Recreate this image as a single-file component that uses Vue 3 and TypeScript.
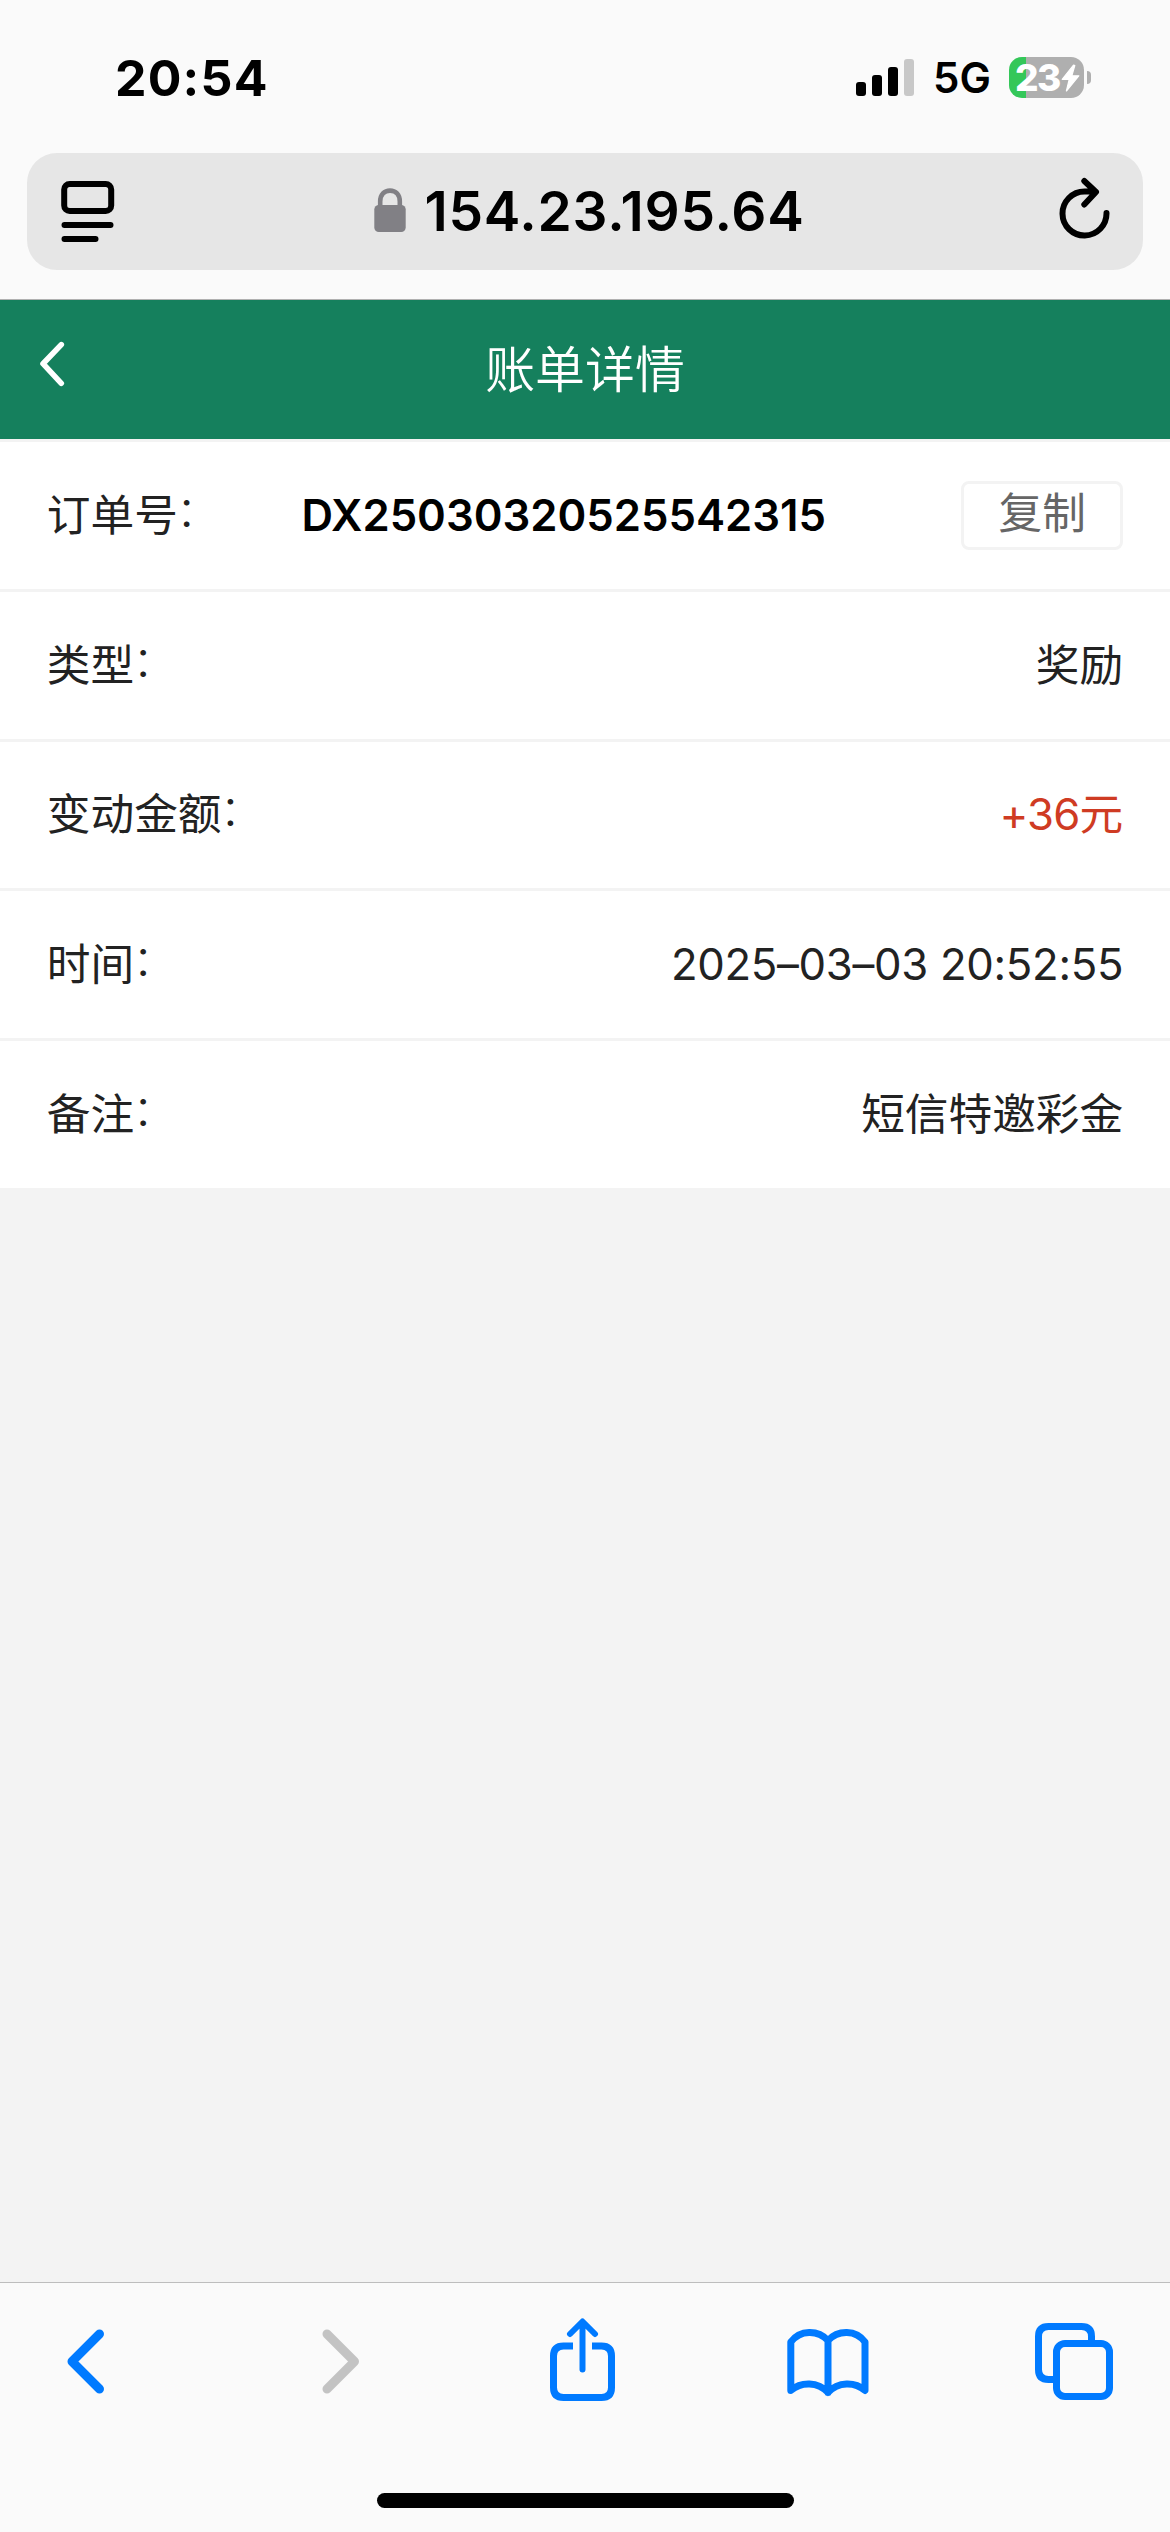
<script setup lang="ts">
interface BillRow {
  label: string
  value: string
  kind?: 'order' | 'amount' | 'number'
}

const rows: BillRow[] = [
  { label: '订单号', value: 'DX25030320525542315', kind: 'order' },
  { label: '类型', value: '奖励' },
  { label: '变动金额', value: '+36', kind: 'amount' },
  { label: '时间', value: '2025–03–03 20:52:55', kind: 'number' },
  { label: '备注', value: '短信特邀彩金' },
]

const copy = (text: string) => navigator.clipboard?.writeText(text)
</script>

<template>
  <div class="screen">
    <header class="chrome">
      <div class="status">
        <span class="clock">20:54</span>
        <div class="indicators">
          <svg class="signal" width="58" height="38" viewBox="0 0 58 38">
            <rect x="0" y="23" width="10" height="14" rx="3" />
            <rect x="16" y="16" width="10" height="21" rx="3" />
            <rect x="32" y="8" width="10" height="29" rx="3" />
            <rect x="48" y="0" width="10" height="37" rx="3" fill="#c8c8c8" />
          </svg>
          <span class="network">5G</span>
          <div class="battery">
            <span class="level">23</span>
            <svg class="bolt" width="19" height="28" viewBox="0 0 19 28">
              <path d="M12.5 1 1.2 15.4h7L5.4 27 17.8 11.8h-7L13.8 1.6z" fill="#fff" stroke="#fff" stroke-width="1.2" stroke-linejoin="round" />
            </svg>
          </div>
          <span class="nub"></span>
        </div>
      </div>

      <div class="urlbar">
        <svg width="54" height="62" viewBox="0 0 54 62" fill="none" stroke="#000" stroke-width="6" stroke-linecap="round">
          <rect x="3.2" y="3" width="47" height="27" rx="5.5" />
          <path d="M3.5 44h46M3.5 58h31" />
        </svg>
        <div class="address">
          <svg class="lock" width="32" height="44" viewBox="0 0 32 44">
            <path d="M6.2 20V13.5C6.2 6.5 10.4 2.6 16 2.6S25.8 6.5 25.8 13.5V20" fill="none" stroke="#818085" stroke-width="4.6" />
            <rect x="0.3" y="17" width="31.4" height="27" rx="4.5" fill="#818085" />
          </svg>
          <span class="host">154.23.195.64</span>
        </div>
        <svg class="reload" width="52" height="64" viewBox="0 0 52 64" fill="none" stroke="#000" stroke-width="6" stroke-linecap="round" stroke-linejoin="round">
          <path d="M47.5 36A22 22 0 1 1 25.5 14.5H36M25.3 4 37 15 25.3 27.5" />
        </svg>
      </div>
    </header>

    <nav class="titlebar">
      <svg class="back" width="26" height="46" viewBox="0 0 26 46" fill="none" stroke="#fff" stroke-width="5.6" stroke-linecap="round" stroke-linejoin="round">
        <path d="M22.3 3.6 4 22.7 22.3 42.3" />
      </svg>
      <h1>账单详情</h1>
    </nav>

    <main class="content">
      <div v-for="row in rows" :key="row.label" class="row">
        <span class="label">{{ row.label }}<span class="colon">：</span></span>
        <template v-if="row.kind === 'order'">
          <strong class="order">{{ row.value }}</strong>
          <button class="copy" type="button" @click="copy(row.value)">复制</button>
        </template>
        <span v-else-if="row.kind === 'amount'" class="value amount"><span class="digits">{{ row.value }}</span>元</span>
        <span v-else class="value" :class="{ digits: row.kind === 'number' }">{{ row.value }}</span>
      </div>
    </main>

    <footer class="toolbar">
      <div class="tools">
        <svg class="prev" width="38" height="66" viewBox="0 0 38 66" fill="none" stroke="#007aff" stroke-width="9" stroke-linecap="round" stroke-linejoin="round">
          <path d="M32.5 6 5 33.5 32.5 61" />
        </svg>
        <svg class="next" width="38" height="66" viewBox="0 0 38 66" fill="none" stroke="#c3c3c3" stroke-width="9" stroke-linecap="round" stroke-linejoin="round">
          <path d="M5 6 32.5 33.5 5 61" />
        </svg>
        <svg class="share" width="65" height="84" viewBox="0 0 65 84" fill="none" stroke="#007aff" stroke-width="7">
          <path d="M23 28H13.5Q3.5 28 3.5 38V69.5Q3.5 79.5 13.5 79.5H51.5Q61.5 79.5 61.5 69.5V38Q61.5 28 51.5 28H42" />
          <path d="M32.5 51.5V4M20 16 32.5 3.5 45 16" stroke-width="6" stroke-linecap="round" stroke-linejoin="round" />
        </svg>
        <svg class="book" width="82" height="72" viewBox="0 0 82 72" fill="none" stroke="#007aff" stroke-width="7" stroke-linecap="round" stroke-linejoin="round">
          <path d="M41 12.5C31 1.5 13 1.5 3.8 14V62.5C14 53.5 31 53.5 41 64.5C51 53.5 68 53.5 78 62.5V14C69 1.5 51 1.5 41 12.5ZM41 12.5V64.5" />
        </svg>
        <svg class="tabs" width="78" height="78" viewBox="0 0 78 78" fill="none" stroke="#007aff" stroke-width="7">
          <path d="M56.5 19V13.5Q56.5 3.5 46.5 3.5H13.5Q3.5 3.5 3.5 13.5V46.5Q3.5 56.5 13.5 56.5H20" />
          <rect x="21.5" y="20.5" width="53" height="53" rx="8.5" />
        </svg>
      </div>
      <div class="home"></div>
    </footer>
  </div>
</template>

<style>
body {
  margin: 0;
  background: #f3f3f3;
}
</style>

<style scoped>
.screen {
  width: 1170px;
  height: 2532px;
  display: flex;
  flex-direction: column;
  background: #f3f3f3;
  font-family: Inter, "Noto Sans CJK SC", sans-serif;
  color: #222;
  overflow: hidden;
}
svg {
  display: block;
  flex: none;
}
.chrome {
  height: 300px;
  box-sizing: border-box;
  background: #fafafa;
  border-bottom: 1px solid #b0b0b0;
}
.status {
  height: 153px;
  box-sizing: border-box;
  padding: 2px 79px 0 115px;
  display: flex;
  align-items: center;
  justify-content: space-between;
  color: #000;
}
.clock {
  font-size: 50px;
  font-weight: 750;
  line-height: 60px;
  letter-spacing: 1.2px;
}
.indicators {
  display: flex;
  align-items: center;
}
.network {
  margin-left: 19px;
  width: 76px;
  font-size: 42px;
  font-weight: 600;
  line-height: 50px;
}
.battery {
  width: 75px;
  height: 41px;
  border-radius: 13px;
  background: linear-gradient(to right, #34c759 17px, #afafaf 17px);
  display: flex;
  align-items: center;
}
.level {
  width: 44px;
  margin-left: 6px;
  font-size: 37px;
  font-weight: 800;
  line-height: 41px;
  letter-spacing: -1.5px;
  color: #fff;
}
.bolt {
  margin-left: 2px;
}
.nub {
  width: 4px;
  height: 13px;
  margin-left: 3px;
  border-radius: 0 5px 5px 0;
  background: #afafaf;
}
.urlbar {
  height: 117px;
  margin: 0 27px;
  padding: 0 32px 0 34px;
  box-sizing: border-box;
  display: flex;
  align-items: center;
  justify-content: space-between;
  border-radius: 30px;
  background: #e6e6e6;
}
.address {
  margin-left: 5px;
  display: flex;
  align-items: center;
}
.lock {
  margin-bottom: 3px;
}
.host {
  margin: -2px 0 0 18px;
  font-size: 55px;
  font-weight: 600;
  line-height: 66px;
  letter-spacing: 0.75px;
  color: #000;
}
.reload {
  margin-bottom: 5px;
}
.titlebar {
  height: 139px;
  display: grid;
  grid-template-columns: 1fr auto 1fr;
  align-items: center;
  background: #15805d;
}
.back {
  margin: -11px 0 0 39px;
}
h1 {
  margin: 0;
  font-size: 49.92px;
  font-weight: 350;
  line-height: 72px;
  color: #fff;
}
.content {
  flex: 1;
}
.row {
  height: 149.76px;
  box-sizing: border-box;
  padding: 1px 46.8px 0;
  display: flex;
  align-items: center;
  justify-content: space-between;
  border-top: 3px solid #f3f3f3;
  background: #fff;
  font-size: 43.68px;
  line-height: 62px;
}
.label {
  white-space: nowrap;
}
.colon {
  margin-left: -2px;
  font-weight: 300;
  line-height: 1;
  vertical-align: 4px;
}
.order {
  width: 523px;
  margin: 1px auto 0 82px;
  font-weight: 600;
  color: #000;
}
.copy {
  width: 162px;
  height: 69px;
  box-sizing: border-box;
  padding: 0 0 4px;
  border: 3px solid #f3f3f3;
  border-radius: 8px;
  background: #fff;
  font: inherit;
  line-height: 59px;
  color: #666;
}
.digits {
  font-weight: 380;
  letter-spacing: -0.3px;
}
.amount {
  color: #cf3b23;
}
.amount .digits {
  letter-spacing: -0.8px;
}
.toolbar {
  height: 250px;
  box-sizing: border-box;
  border-top: 1px solid #bdbdbd;
  background: #fafafa;
}
.tools {
  height: 210px;
  display: flex;
  align-items: flex-start;
}
.prev {
  margin: 45px 0 0 67px;
}
.next {
  margin: 45px 0 0 217px;
}
.share {
  margin: 35px 0 0 190px;
}
.book {
  margin: 45px 0 0 172px;
}
.tabs {
  margin: 40px 0 0 166px;
}
.home {
  width: 417px;
  height: 15px;
  margin: 0 auto;
  border-radius: 8px;
  background: #000;
}
</style>
